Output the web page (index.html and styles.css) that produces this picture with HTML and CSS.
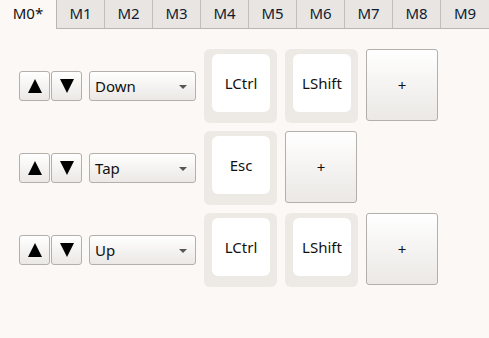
FILE: index.html
```html
<!DOCTYPE html>
<html lang="en">
<head>
    <meta charset="UTF-8">
    <title>Macro editor</title>
    <link rel="stylesheet" href="styles.css">
</head>
<body>
<ul class="tabs">
    <li class="cur">M0*</li>
    <li>M1</li>
    <li>M2</li>
    <li>M3</li>
    <li>M4</li>
    <li>M5</li>
    <li>M6</li>
    <li>M7</li>
    <li>M8</li>
    <li>M9</li>
</ul>

<div class="content">
    <div class="row">
        <div class="spin">
            <button class="btn"><span class="up"></span></button>
            <button class="btn"><span class="down"></span></button>
        </div>
        <div class="combo">Down<span class="arrow"></span></div>
        <div class="key"><div class="cap">LCtrl</div></div>
        <div class="key"><div class="cap">LShift</div></div>
        <button class="add">+</button>
    </div>

    <div class="row">
        <div class="spin">
            <button class="btn"><span class="up"></span></button>
            <button class="btn"><span class="down"></span></button>
        </div>
        <div class="combo">Tap<span class="arrow"></span></div>
        <div class="key"><div class="cap">Esc</div></div>
        <button class="add">+</button>
    </div>

    <div class="row">
        <div class="spin">
            <button class="btn"><span class="up"></span></button>
            <button class="btn"><span class="down"></span></button>
        </div>
        <div class="combo">Up<span class="arrow"></span></div>
        <div class="key"><div class="cap">LCtrl</div></div>
        <div class="key"><div class="cap">LShift</div></div>
        <button class="add">+</button>
    </div>
</div>
</body>
</html>
```

FILE: styles.css
```css
*{
    padding: 0;
    margin: 0;
    box-sizing: border-box;
}
body{
    background-color: #fcf8f5;
    font-family: "Noto Sans", "Open Sans", sans-serif;
    font-size: 15px;
    color: #111;
}
.tabs{
    display: flex;
    list-style: none;
    height: 29px;
    border-bottom: 1px solid #b9b5b1;
}
.tabs li{
    width: 48px;
    height: 28px;
    line-height: 26px;
    text-align: center;
    background-color: #e8e5e2;
    border-left: 1px solid #c2beba;
    color: #0f1b33;
}
.tabs li:last-child{
    flex: 1;
}
.tabs .cur{
    width: 56px;
    height: 29px;
    background-color: #fcf8f5;
    border-left: none;
    color: #111;
}
.tabs .cur + li{
    border-left: 1px solid #b9b5b1;
}
.content{
    padding: 20px 19px;
    display: flex;
    flex-direction: column;
    gap: 8px;
}
.row{
    display: flex;
    align-items: center;
    height: 74px;
    gap: 8px;
}
.spin{
    display: flex;
    gap: 1px;
    margin-right: -1px;
}
.btn, .combo, .add{
    border: 1px solid #b3afab;
    border-radius: 3px;
    background: linear-gradient(#ffffff, #ebe8e5);
    font-family: inherit;
    color: #111;
}
.btn{
    width: 31px;
    height: 30px;
    display: flex;
    align-items: center;
    justify-content: center;
}
.up, .down{
    width: 0;
    height: 0;
    border-left: 7px solid transparent;
    border-right: 7px solid transparent;
}
.up{
    border-bottom: 14px solid #000;
}
.down{
    border-top: 14px solid #000;
}
.combo{
    width: 107px;
    height: 30px;
    line-height: 28px;
    padding-left: 5px;
    position: relative;
}
.arrow{
    position: absolute;
    right: 8px;
    top: 13px;
    border-left: 4px solid transparent;
    border-right: 4px solid transparent;
    border-top: 4px solid #555;
}
.key{
    width: 73px;
    height: 74px;
    background-color: #edeae6;
    border-radius: 6px;
    padding: 5px 7px 11px 8px;
}
.cap{
    width: 58px;
    height: 58px;
    background-color: #fff;
    border-radius: 6px;
    display: flex;
    align-items: center;
    justify-content: center;
}
.add{
    width: 72px;
    height: 72px;
    font-size: 15px;
    margin-top: -2px;
}
```
